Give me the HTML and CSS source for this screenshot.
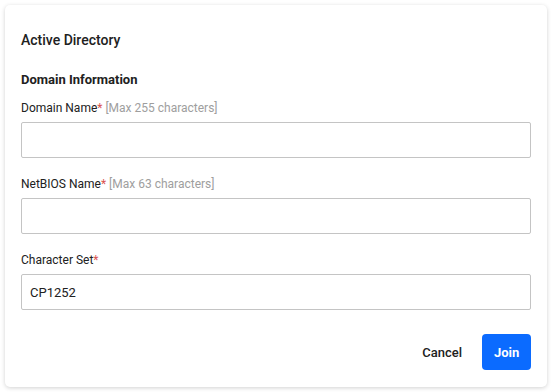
FILE: index.html
```html
<!DOCTYPE html>
<html lang="en">
<head>
  <meta charset="UTF-8">
  <meta name="viewport" content="width=device-width, initial-scale=1.0">
  <title>Active Directory</title>
  <link rel="stylesheet" href="styles.css">
</head>
<body>
  <div class="card">
    <h2 class="card-title">Active Directory</h2>
    <h3 class="section-title">Domain Information</h3>

    <div class="field">
      <label class="field-label">Domain Name<span class="req">*</span> <span class="hint">[Max 255 characters]</span></label>
      <input type="text" class="field-input">
    </div>

    <div class="field">
      <label class="field-label">NetBIOS Name<span class="req">*</span> <span class="hint">[Max 63 characters]</span></label>
      <input type="text" class="field-input">
    </div>

    <div class="field">
      <label class="field-label">Character Set<span class="req">*</span></label>
      <input type="text" class="field-input" value="CP1252">
    </div>

    <div class="actions">
      <button class="btn btn-text">Cancel</button>
      <button class="btn btn-primary">Join</button>
    </div>
  </div>
</body>
</html>
```

FILE: styles.css
```css
body {
  margin: 0;
  padding: 5px;
  background-color: #fff;
  font-family: Roboto, "Liberation Sans", sans-serif;
  color: #212121;
}

.card {
  width: 542px;
  height: 382px;
  box-sizing: border-box;
  padding: 25px 16px 17px;
  background-color: #fff;
  border-radius: 5px;
  box-shadow: 0px 1px 4px rgba(0, 0, 0, 0.18);
  display: flex;
  flex-direction: column;
}

.card-title {
  margin: 0;
  font-size: 14px;
  line-height: 20px;
  font-weight: 500;
}

.section-title {
  margin: 20px 0 0;
  font-size: 13px;
  line-height: 20px;
  font-weight: 700;
}

.field {
  display: flex;
  flex-direction: column;
  margin-top: 10px;
}

.field + .field {
  margin-top: 18px;
}

.field-label {
  font-size: 12px;
  line-height: 16px;
  margin-bottom: 6px;
}

.req {
  color: #d9534f;
}

.hint {
  color: #9e9e9e;
}

.field-input {
  height: 36px;
  box-sizing: border-box;
  border: 1px solid #c4c4c4;
  border-radius: 2px;
  padding: 0 8px;
  font-family: inherit;
  font-size: 13px;
  color: #212121;
  outline: none;
}

.actions {
  display: flex;
  justify-content: flex-end;
  align-items: center;
  gap: 12px;
  margin-top: 24px;
}

.btn {
  height: 36px;
  border: none;
  border-radius: 4px;
  font-family: inherit;
  font-size: 13px;
  font-weight: 500;
  cursor: pointer;
}

.btn-text {
  background: none;
  color: #212121;
  padding: 0 8px;
}

.btn-primary {
  background-color: #0b6bff;
  color: #fff;
  font-weight: 700;
  padding: 0 12px;
  width: 49px;
}
```
